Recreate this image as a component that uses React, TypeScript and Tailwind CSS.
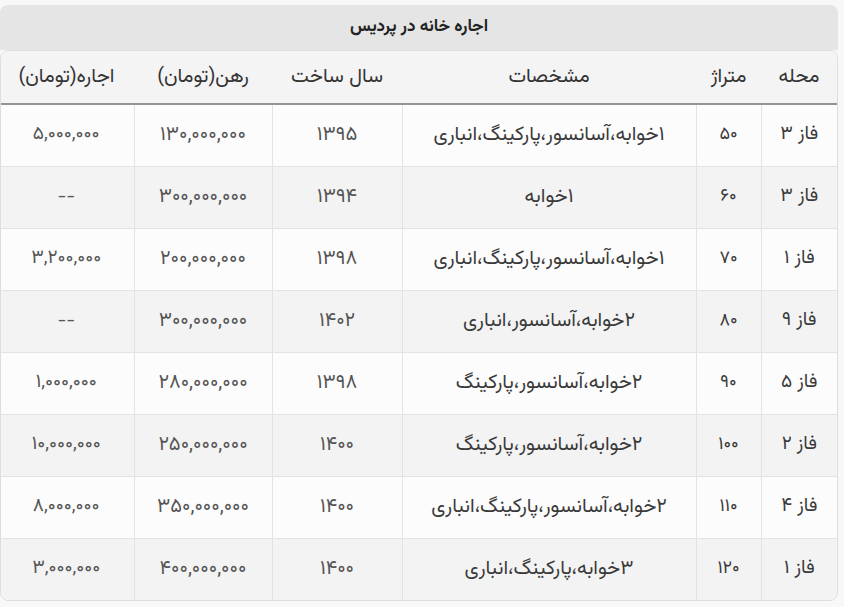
import React from 'react';

// ردیف‌های جدول اجاره
const rows = [
  ['فاز ۳', '۵۰', '۱خوابه،آسانسور،پارکینگ،انباری', '۱۳۹۵', '۱۳۰,۰۰۰,۰۰۰', '۵,۰۰۰,۰۰۰'],
  ['فاز ۳', '۶۰', '۱خوابه', '۱۳۹۴', '۳۰۰,۰۰۰,۰۰۰', '--'],
  ['فاز ۱', '۷۰', '۱خوابه،آسانسور،پارکینگ،انباری', '۱۳۹۸', '۲۰۰,۰۰۰,۰۰۰', '۳,۲۰۰,۰۰۰'],
  ['فاز ۹', '۸۰', '۲خوابه،آسانسور،انباری', '۱۴۰۲', '۳۰۰,۰۰۰,۰۰۰', '--'],
  ['فاز ۵', '۹۰', '۲خوابه،آسانسور،پارکینگ', '۱۳۹۸', '۲۸۰,۰۰۰,۰۰۰', '۱,۰۰۰,۰۰۰'],
  ['فاز ۲', '۱۰۰', '۲خوابه،آسانسور،پارکینگ', '۱۴۰۰', '۲۵۰,۰۰۰,۰۰۰', '۱۰,۰۰۰,۰۰۰'],
  ['فاز ۴', '۱۱۰', '۲خوابه،آسانسور،پارکینگ،انباری', '۱۴۰۰', '۳۵۰,۰۰۰,۰۰۰', '۸,۰۰۰,۰۰۰'],
  ['فاز ۱', '۱۲۰', '۳خوابه،پارکینگ،انباری', '۱۴۰۰', '۴۰۰,۰۰۰,۰۰۰', '۳,۰۰۰,۰۰۰'],
];

const headers = ['محله', 'متراژ', 'مشخصات', 'سال ساخت', 'رهن(تومان)', 'اجاره(تومان)'];
const widths = ['w-[76px]', 'w-[65px]', 'w-[294px]', 'w-[130px]', 'w-[138px]', 'w-[135px]'];
const cellText = ['text-[19px]', 'text-[18px]', 'text-[20px]', 'text-[20px]', 'text-[20px]', 'text-[19px]'];

const App: React.FC = () => {
  return (
    <div
      dir="rtl"
      className="w-[844px] h-[607px] bg-[#f8f8f8] pt-[5px] pr-[6px] text-[#333]"
      style={{ fontFamily: '"Vazirmatn", "DejaVu Sans", sans-serif' }}
    >
      <div className="w-[838px]">
        {/* عنوان جدول */}
        <div className="h-[45px] bg-[#e5e5e5] rounded-t-lg flex items-center justify-center text-[17px] font-bold text-[#222]">
          اجاره خانه در پردیس
        </div>

        <div className="border border-[#dedede] rounded-lg overflow-hidden">
          <table className="w-full border-collapse table-fixed">
            <thead>
              <tr className="bg-[#f4f4f4] h-[53px] border-b-2 border-[#949494]">
                {headers.map((h, i) => (
                  <th key={h} className={`${widths[i]} font-normal text-[20px] text-[#333] text-center`}>
                    {h}
                  </th>
                ))}
              </tr>
            </thead>
            <tbody>
              {rows.map((r, ri) => (
                <tr key={ri} className={`h-[62px] ${ri % 2 === 1 ? 'bg-[#f3f3f3]' : 'bg-[#fcfcfc]'} ${ri < rows.length - 1 ? 'border-b border-[#e3e3e3]' : ''}`}>
                  {r.map((c, ci) => (
                    <td
                      key={ci}
                      className={`text-center ${cellText[ci]} ${ci > 2 ? 'text-[#555]' : 'text-[#3a3a3a]'} ${ci < r.length - 1 ? 'border-l border-[#e3e3e3]' : ''}`}
                    >
                      {c}
                    </td>
                  ))}
                </tr>
              ))}
            </tbody>
          </table>
        </div>
      </div>
    </div>
  );
};

export default App;
